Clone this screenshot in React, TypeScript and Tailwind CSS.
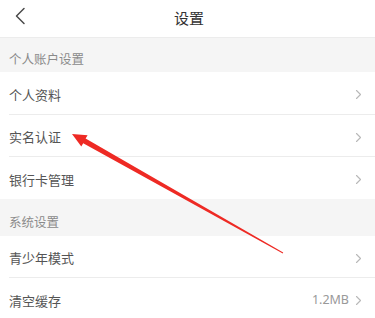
import React from "react";

const font = { fontFamily: '"Noto Sans CJK SC", "Noto Sans", sans-serif' };

function Chevron() {
  return (
    <svg width="7" height="11" viewBox="0 0 7 11" className="shrink-0">
      <path d="M1.5 1.5 L5.5 5.5 L1.5 9.5" fill="none" stroke="#b8b8b8" strokeWidth="1.1" strokeLinecap="round" strokeLinejoin="round" />
    </svg>
  );
}

function Row({ label, value, last, h = "h-[42px]" }: { label: string; value?: string; last?: boolean; h?: string }) {
  return (
    <div className={`ml-[9px] flex items-center pr-[13px] pt-[3px] ${h} ${last ? "" : "border-b border-[#ececec]"}`}>
      <span className="flex-1 text-[13px] text-[#555555]">{label}</span>
      {value && <span className="mr-[6px] text-[12.5px] text-[#999999]" style={{ fontFamily: '"Noto Sans", sans-serif' }}>{value}</span>}
      <Chevron />
    </div>
  );
}

function Section({ label, h }: { label: string; h: string }) {
  return (
    <div className={`flex items-center bg-[#f5f5f5] pl-[9px] pt-[9px] ${h}`}>
      <span className="text-[12.5px] text-[#8a8a8a]">{label}</span>
    </div>
  );
}

export default function App() {
  return (
    <div className="relative h-[318px] w-[375px] overflow-hidden bg-white" style={font}>
      <div className="relative flex h-[38px] items-center justify-center border-b border-[#ececec]">
        <svg width="12" height="18" viewBox="0 0 12 18" className="absolute left-[14px] top-[7px]">
          <path d="M10 1.5 L2.5 9 L10 16.5" fill="none" stroke="#4a4a4a" strokeWidth="1.5" strokeLinecap="round" strokeLinejoin="round" />
        </svg>
        <span className="pl-[3px] text-[15px] text-[#333333]">设置</span>
      </div>
      <Section label="个人账户设置" h="h-[34px]" />
      <Row label="个人资料" h="h-[43px]" />
      <Row label="实名认证" />
      <Row label="银行卡管理" last />
      <Section label="系统设置" h="h-[37px]" />
      <Row label="青少年模式" />
      <Row label="清空缓存" value="1.2MB" last />
      <svg className="pointer-events-none absolute left-0 top-0" width="375" height="318" viewBox="0 0 375 318">
        <polygon points="72,134 81.3,146.6 83.2,143.3 282.8,253.5 283.2,252.6 85.6,138.6 87.6,135.3" fill="#ee2a24" />
      </svg>
    </div>
  );
}
